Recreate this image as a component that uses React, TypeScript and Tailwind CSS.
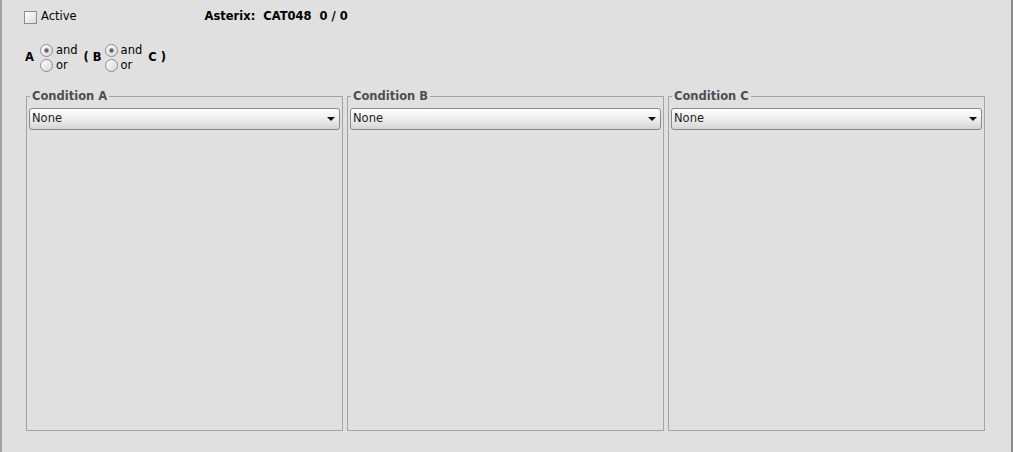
import type { ReactElement } from 'react';

const font = "font-['DejaVu_Sans',sans-serif]";

function CheckBox(): ReactElement {
    return (
        <span className="inline-block h-[13px] w-[13px] shrink-0 border border-[#8e8e8e] bg-[linear-gradient(135deg,#ffffff_0%,#eaeaea_60%,#dcdcdc_100%)]" />
    );
}

function Radio({ checked }: { checked?: boolean }): ReactElement {
    return (
        <svg width="13" height="13" viewBox="0 0 13 13" className="shrink-0">
            <defs>
                <linearGradient id="rg" x1="0" y1="0" x2="1" y2="1">
                    <stop offset="0" stopColor="#ffffff" />
                    <stop offset="1" stopColor="#d6d6d6" />
                </linearGradient>
            </defs>
            <circle cx="6.5" cy="6.5" r="6" fill="url(#rg)" stroke="#8c8c8c" strokeWidth="1" />
            {checked ? <circle cx="6.5" cy="6.5" r="2.2" fill="#5a5a5a" stroke="#b8b8b8" strokeWidth="0.8" /> : null}
        </svg>
    );
}

function AndOr(): ReactElement {
    return (
        <div className="flex flex-col gap-[2px]">
            <div className="flex h-[13px] items-center gap-[3px]">
                <Radio checked />
                <span className="leading-none">and</span>
            </div>
            <div className="flex h-[13px] items-center gap-[3px]">
                <Radio />
                <span className="leading-none">or</span>
            </div>
        </div>
    );
}

function ComboBox(): ReactElement {
    return (
        <div className="flex h-[22px] items-center rounded-[3px] border border-[#8a8a8a] bg-[linear-gradient(to_bottom,#ffffff_0%,#f3f3f3_35%,#e2e2e2_75%,#d4d4d4_100%)] pl-[2px] pr-[4px]">
            <span className="flex-1 text-[11.5px] text-[#222]">None</span>
            <svg width="8" height="4" viewBox="0 0 8 4">
                <path d="M0 0H8L4 4Z" fill="#111" />
            </svg>
        </div>
    );
}

function ConditionPanel({ title }: { title: string }): ReactElement {
    return (
        <fieldset className="flex h-[342px] w-[317px] flex-col border border-[#a4a4a4] px-[2px]">
            <legend className="ml-[1px] px-[2px] text-[11.5px] font-bold leading-[14px] text-[#4e4e4e]">{title}</legend>
            <div className="mt-[5px]">
                <ComboBox />
            </div>
        </fieldset>
    );
}

export default function App(): ReactElement {
    return (
        <div className={`${font} h-[452px] w-[1013px] overflow-hidden border-l-2 border-r-2 border-l-[#a0a0a0] border-r-[#8c8c8c] bg-[#e0e0e0] text-[11.5px] text-black`}>
            <div className="mt-[8px] flex h-[18px] items-center pl-[22px]">
                <CheckBox />
                <span className="ml-[4px]">Active</span>
                <span className="ml-[128px] font-bold whitespace-pre">Asterix:  CAT048  0 / 0</span>
            </div>
            <div className="mt-[18px] flex h-[28px] items-center pl-[23px] font-bold">
                <span className="mr-[6px]">A</span>
                <div className="font-normal">
                    <AndOr />
                </div>
                <span className="ml-[6px] mr-[3px] whitespace-pre">( B</span>
                <div className="font-normal">
                    <AndOr />
                </div>
                <span className="ml-[6px] whitespace-pre">C )</span>
            </div>
            <div className="mt-[17px] flex gap-[4px] pl-[24px]">
                <ConditionPanel title="Condition A" />
                <ConditionPanel title="Condition B" />
                <ConditionPanel title="Condition C" />
            </div>
        </div>
    );
}
